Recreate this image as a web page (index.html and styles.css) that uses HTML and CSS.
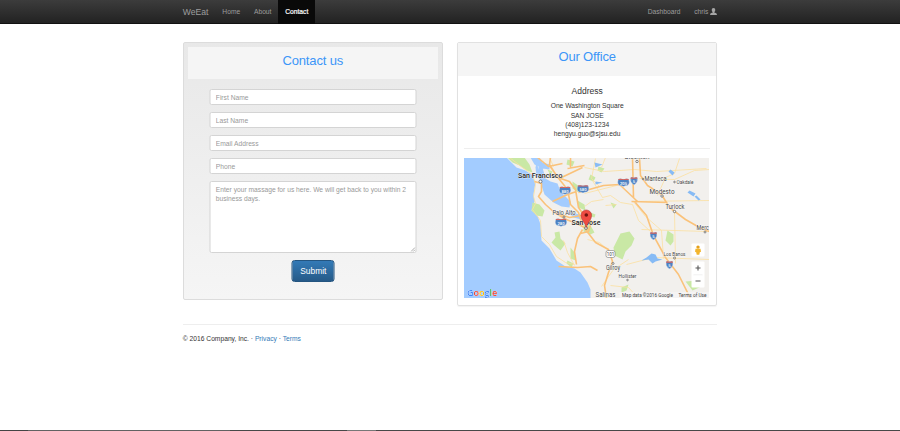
FILE: index.html
```html
<!DOCTYPE html>
<html lang="en">
<head>
<meta charset="utf-8">
<title>Contact - WeEat</title>
<link rel="stylesheet" href="styles.css">
</head>
<body>
<nav class="navbar">
  <div class="container nav-inner">
    <a class="brand">WeEat</a>
    <a class="nav-link">Home</a>
    <a class="nav-link">About</a>
    <a class="nav-link active">Contact</a>
    <a class="nav-link push">Dashboard</a>
    <a class="nav-link user">chris <svg class="user-icon" viewBox="0 0 14 14"><path d="M7 0C4.500 0 3.500 1.800 3.500 4c0 1.600.8 3.300 1.900 4v1C4.500 9.800.5 10.500.3 12v2h13.400v-2c-.2-1.500-4.200-2.200-5.100-3V8c1.100-.7 1.900-2.400 1.900-4 0-2.200-1-4-3.500-4z"/></svg></a>
  </div>
</nav>
<main class="container">
  <div class="columns">
    <section class="well">
      <h3 class="well-heading">Contact us</h3>
      <form class="form">
        <input class="control" placeholder="First Name">
        <input class="control" placeholder="Last Name">
        <input class="control" placeholder="Email Address">
        <input class="control" placeholder="Phone">
        <div class="message-wrap">
          <textarea class="control message" placeholder="Enter your massage for us here. We will get back to you within 2 business days."></textarea>
          <svg class="grip" viewBox="0 0 5 5"><path d="M.5 4.500l4-4M2.700 4.500l1.800-1.800"/></svg>
        </div>
        <button type="button" class="submit">Submit</button>
      </form>
    </section>
    <section class="panel">
      <h3 class="panel-heading">Our Office</h3>
      <div class="panel-body">
        <h4 class="address-title">Address</h4>
        <address class="address">One Washington Square<br>SAN JOSE<br>(408)123-1234<br>hengyu.guo@sjsu.edu</address>
        <hr class="divider">
        <svg class="map" viewBox="464.500 157.500 245 140.500">
          <defs>
            <g id="shield"><path d="M-3.200-3.500Q-1.500-4 0-3.200Q1.500-4 3.200-3.500Q4.500 1 0 4Q-4.500 1-3.200-3.500z" fill="#4d82c3" stroke="#dce7f3" stroke-width=".4"/><path d="M-3.200-3.600Q-1.500-4 0-3.200Q1.500-4 3.200-3.600L3.500-2.200H-3.500z" fill="#d4655f"/></g>
            <g id="wide"><path d="M-5-3.500Q-2-4 0-3.200Q2-4 5-3.500Q7 1 4 3Q2 2.800 0 4Q-2 2.800-4 3Q-7 1-5-3.500z" fill="#4d82c3" stroke="#dce7f3" stroke-width=".4"/><path d="M-5-3.600Q-2-4 0-3.200Q2-4 5-3.600L5.300-2.400H-5.300z" fill="#d4655f"/></g>
          </defs>
          <path fill="#f2f0ed" d="M464 157h246v142H464z"/>
          <path fill="#a3ccff" d="M464 157h43l6 6 4 4 9 3 6 4 4 8-2 12 1 7-3 9 6 5 3 9 1 16 8 8 7 12 9 6 9 2 6 4 7 10 3 7v10H464z"/>
          <path fill="#a3ccff" d="M531 157h9l3 5 7 2v5l-7-1-8-4zM539 166l4 1 3 11 5 3 7 2 3 8 5 5 5 5-1 6-8-1-8-4-9-8-4-12-2-9zM568 211l12 3 2 5-8-2z"/>
          <path fill="#a3ccff" d="M537 162l3 9 1 8-4-3-1-9z"/>
          <g fill="#c9e8a5"><path d="M508 157h17l5 7 3 8-6-2-7-5-7-3zM533 202l7 2 5 6-2 6-6-1-5-5zM555 232l5-1 1 7 5 5-5 7-6-5-3-3 4-5zM584 224l7 1 4 7-4 2-7-3zM621 233l9-2 5 7-3 7-6 6-3 8-8-4-1-8 3-6zM668 230l6 4v7l-3 4-5-5zM568 159l7 2-2 5-6-2zM548 169l5 2-2 4zM573 181l7 5-1 6-6-4zM578 200l7 4 1 6-7-3zM591 174l5 3-2 4-5-2zM591 212l5 2-1 3-4-1zM571 247l4 5 1 8-5-2zM568 260l6 3-2 4-5-4zM622 287l7-3-2 6-5 2zM611 202l6 2-3 4zM599 166l6 2-3 4-4-2zM686 281l12-1 4 6-9 4z"/></g>
          <g fill="none" stroke="#fbdfa0" stroke-width=".8"><path d="M510 157l13 10 10 7 3 10-2 12 2 7-3 6 8 11 1 16 8 8 7 12 9 6 9 2M606 157l-4 10M585 167l20 4 30-2 22 2 50-3M585 193l32-8M633 201l77-1M634 201l12 15 16 14 2 28M675 211l1 52M642 229l66 2M627 264l27-7 56 2M602 286l12-17 15-10M593 180l10 17 8-2 10 7 12 2 6 16 12 11M585 206l7-5 12-2M588 239l12 3 9 8M564 240l4 12 7 13M680 158l-5 15-9 4-8 18M640 178l35 1 20-9 15-1M611 285l18 2 10 11M550 157l4 9M596 158l-4 20 8 8M606 205l11-1"/></g>
          <g fill="none" stroke="#fac27a" stroke-width="1.600" stroke-linejoin="round"><path d="M535 181l7 2v8l-3 5 7 8 9 8 12 7 12 5 10 5M551 157l-1 7 8 13 12 4 6 8 3 18 7 10 2 10M538 157l11 9 14-3M550 165l10 14 8 10 3 15 8 8 4 13M568 168l17-3M562 177l21-10M579 192l25-7 16-1 18 17M558 213l12 4 12-2 10 6-3 10-8 2M553 201l15-7 9-3M633 157l1 40M640 157l1 18 7 10 14 9 8 13 16 12 14 8 10 4M635 201l12 14 7 20 12 22 13 17 12 24M586 229l10 13 13 7 4 12-4 11-4 13 2 13M583 229l-5 9-3 13 2 13M559 266l19 1 13-1 7 4M632 201l36 1M571 157v11"/></g>
          <g fill="#87bbf5"><path d="M647 257l5-4 4 1 2 4 5 1-7 2-3 2-4-4-7 1zM671 169l4 3-2 3-4-4zM690 190l6 3-2 3-6-4zM697 195l4 4-2 1-4-4zM595 162l8 2-7 3zM596 181l7 1-7 2z"/></g>
          <use href="#wide" x="565.500" y="190"/><use href="#wide" x="583.500" y="188.500"/><use href="#wide" x="624" y="182"/><use href="#shield" x="634.500" y="180.500"/><use href="#wide" x="561.500" y="222"/><use href="#shield" x="654" y="235.500"/><use href="#shield" x="670" y="264.500"/>
          <g class="shield-text"><text x="565.500" y="192">880</text><text x="583.500" y="190.500">580</text><text x="624" y="184">205</text><text x="634.500" y="182.500">5</text><text x="561.500" y="224">280</text><text x="654" y="237.500">5</text><text x="670" y="266.500">5</text></g>
          <rect x="606.500" y="250" width="9" height="7" rx="2" fill="#fff" stroke="#777" stroke-width=".6"/><text class="route" x="611" y="255.500">101</text>
          <g fill="#fff" stroke="#555" stroke-width=".7"><circle cx="541" cy="181" r="1.500"/><circle cx="564.500" cy="216.500" r="1"/><circle cx="586.500" cy="227.500" r="1.400"/><circle cx="637.500" cy="161" r="1.200"/><circle cx="643.500" cy="178.500" r=".8"/><circle cx="662.500" cy="195.500" r="1.200"/><circle cx="675" cy="211" r="1.200"/><circle cx="675" cy="181.500" r=".8"/><circle cx="613.500" cy="263" r="1"/><circle cx="628" cy="279.500" r=".8"/><circle cx="675" cy="257.500" r="1"/><circle cx="705.500" cy="231.500" r="1"/></g>
          <g class="place"><text class="city" x="518.500" y="177.800" textLength="44.500" lengthAdjust="spacingAndGlyphs">San Francisco</text><text class="city" x="572" y="224.500" textLength="29" lengthAdjust="spacingAndGlyphs">San Jose</text><text x="553" y="214.500" textLength="23" lengthAdjust="spacingAndGlyphs">Palo Alto</text><text x="645" y="180.500" textLength="22" lengthAdjust="spacingAndGlyphs">Manteca</text><text class="mid" x="650" y="193" textLength="25" lengthAdjust="spacingAndGlyphs">Modesto</text><text x="666" y="208.500" textLength="19" lengthAdjust="spacingAndGlyphs">Turlock</text><text class="tiny" x="677" y="183.500" textLength="17" lengthAdjust="spacingAndGlyphs">Oakdale</text><text x="697" y="229" textLength="12.300" lengthAdjust="spacingAndGlyphs">Merc</text><text x="606.500" y="269.500" textLength="14" lengthAdjust="spacingAndGlyphs">Gilroy</text><text class="tiny" x="619" y="277.500" textLength="18" lengthAdjust="spacingAndGlyphs">Hollister</text><text class="tiny" x="664" y="255.500" textLength="22" lengthAdjust="spacingAndGlyphs">Los Banos</text><text x="596" y="296" textLength="20" lengthAdjust="spacingAndGlyphs">Salinas</text><text x="625" y="158.500" textLength="25" lengthAdjust="spacingAndGlyphs">Stockton</text></g>
          <path d="M586.700 227c-.8-5-5.200-7-5.200-12.200a5.300 5.300 0 0 1 10.600 0c0 5.200-4.600 7.200-5.400 12.200z" fill="#ef4b42" stroke="#b33a35" stroke-width=".6"/><circle cx="586.800" cy="214.500" r="1.800" fill="#6e1410"/>
          <path fill="#f5f5f5" opacity=".75" d="M620 291.500h90v7h-90z"/>
          <text class="legal" x="622.500" y="296.500" textLength="51" lengthAdjust="spacingAndGlyphs">Map data ©2016 Google</text><text class="legal" x="679" y="296.500" textLength="28" lengthAdjust="spacingAndGlyphs">Terms of Use</text>
          <text class="google" x="467.500" y="295.300"><tspan fill="#4285f4">G</tspan><tspan fill="#ea4335">o</tspan><tspan fill="#fbbc05">o</tspan><tspan fill="#4285f4">g</tspan><tspan fill="#34a853">l</tspan><tspan fill="#ea4335">e</tspan></text>
          <g fill="#fff"><rect x="692" y="243" width="13" height="13" rx="1"/><rect x="692" y="261" width="13" height="26" rx="1"/></g>
          <circle cx="698.500" cy="246.600" r="1.700" fill="#e5a11b"/><path d="M696 248.300h5l.5 3-1.200.5-.5 2.500h-2.600l-.5-2.500-1.200-.5z" fill="#f3b52c"/>
          <path d="M696 267.500h5M698.500 265v5M696 280.500h5" stroke="#555" stroke-width="1.100"/><path d="M694 274.300h9" stroke="#e6e6e6" stroke-width=".6"/>
        </svg>
      </div>
    </section>
  </div>
  <footer class="footer">© 2016 Company, Inc. · <a>Privacy</a> · <a>Terms</a></footer>
</main>
<div class="taskbar"></div>
</body>
</html>
```

FILE: styles.css
```css
* { box-sizing: border-box; }
body {
  margin: 0;
  height: 431px;
  overflow: hidden;
  display: flex;
  flex-direction: column;
  font: 6.7px/9.375px "Liberation Sans", Arial, sans-serif;
  color: #333;
  background: #fff;
}
.container { width: 534.4px; margin: 0 auto; }
.navbar { height: 24px; background: linear-gradient(#3c3c3c, #222); border-bottom: 1px solid #111; }
.nav-inner { display: flex; height: 24px; color: #9d9d9d; }
.brand { font-size: 8.6px; line-height: 24px; padding-right: 7px; }
.nav-link { padding: 0 6.9px; line-height: 24px; }
.active { color: #fff; background: #090909; -webkit-text-stroke: .2px #fff; }
.push { margin-left: auto; }
.user { padding-right: 0; }
.user-icon { width: 7px; height: 7px; fill: #a5a5a5; vertical-align: -1px; }
.columns { display: grid; grid-template-columns: 260px 260px; justify-content: space-between; align-items: start; padding-top: 18px; }
.well {
  height: 258px;
  padding: 4px;
  border: 1px solid #dcdcdc;
  border-radius: 2px;
  background: linear-gradient(#e8e8e8, #f5f5f5);
}
h3 { margin: 0; font-size: 13px; letter-spacing: -.15px; font-weight: 400; line-height: 17px; text-align: center; color: #3c96f8; background: #f5f5f5; }
.well-heading { height: 32px; padding-top: 5px; }
.form { width: 207px; margin: 10px auto 0; transform: translateX(.5px); display: flex; flex-direction: column; gap: 7px; }
.control {
  display: block;
  width: 100%;
  height: 16px;
  margin: 0;
  padding: 2px 5px;
  border: 1px solid #d4d4d4;
  border-radius: 2px;
  background: #fff;
  font: inherit;
}
.control::placeholder { color: #999; opacity: 1; }
.message-wrap { position: relative; }
.message { height: 72px; padding-top: 3px; resize: none; }
.grip { position: absolute; right: 1px; bottom: 1px; width: 5px; height: 5px; fill: none; stroke: #777; stroke-width: .6; }
.submit {
  align-self: center;
  width: 43px;
  height: 22px;
  padding: 0;
  border: 1px solid #245580;
  border-radius: 3px;
  color: #fff;
  background: linear-gradient(#337ab7, #265a88);
  font: 8.44px "Liberation Sans", Arial, sans-serif;
}
.panel { height: 264px; border: 1px solid #e1e1e1; border-radius: 2px; text-align: center; box-shadow: 0 1px 1px rgba(0, 0, 0, .05); }
.panel-heading { height: 33px; padding-top: 5px; }
.panel-body { padding: 11px 6px 0; }
.address-title { margin: 0 0 5px; font-size: 8.5px; font-weight: 400; line-height: 9.3px; }
.address { font-style: normal; }
.divider { margin: 9px 0; border: 0; border-top: 1px solid #eee; }
.map { display: block; width: 245px; height: 140.5px; overflow: hidden; }
.map text { font-family: Roboto, sans-serif; }
.place text { font-size: 6.3px; fill: #444; stroke: #fff; stroke-width: .6px; paint-order: stroke; }
.place .city { font-size: 7px; fill: #222; font-weight: 500; }
.place .mid { font-size: 6.8px; }
.place .tiny { font-size: 5.2px; }
.shield-text text { font-size: 4.2px; fill: #fff; text-anchor: middle; font-weight: 500; }
.map .route { font-size: 4.5px; text-anchor: middle; fill: #444; }
.map .legal { font-size: 5.2px; fill: #444; }
.map .google { font: 600 9px "Open Sans", sans-serif; filter: drop-shadow(0 0 .5px #fff) drop-shadow(0 0 .4px #fff); }
.footer { margin-top: 18px; padding-top: 9px; border-top: 1px solid #eee; }
.footer a { color: #337ab7; }
.taskbar { height: 1px; margin-top: auto; background: linear-gradient(90deg, #444 28px, #626262 28px 230px, #484848 230px 347px, #777 347px 376px, #484848 376px); }
```
